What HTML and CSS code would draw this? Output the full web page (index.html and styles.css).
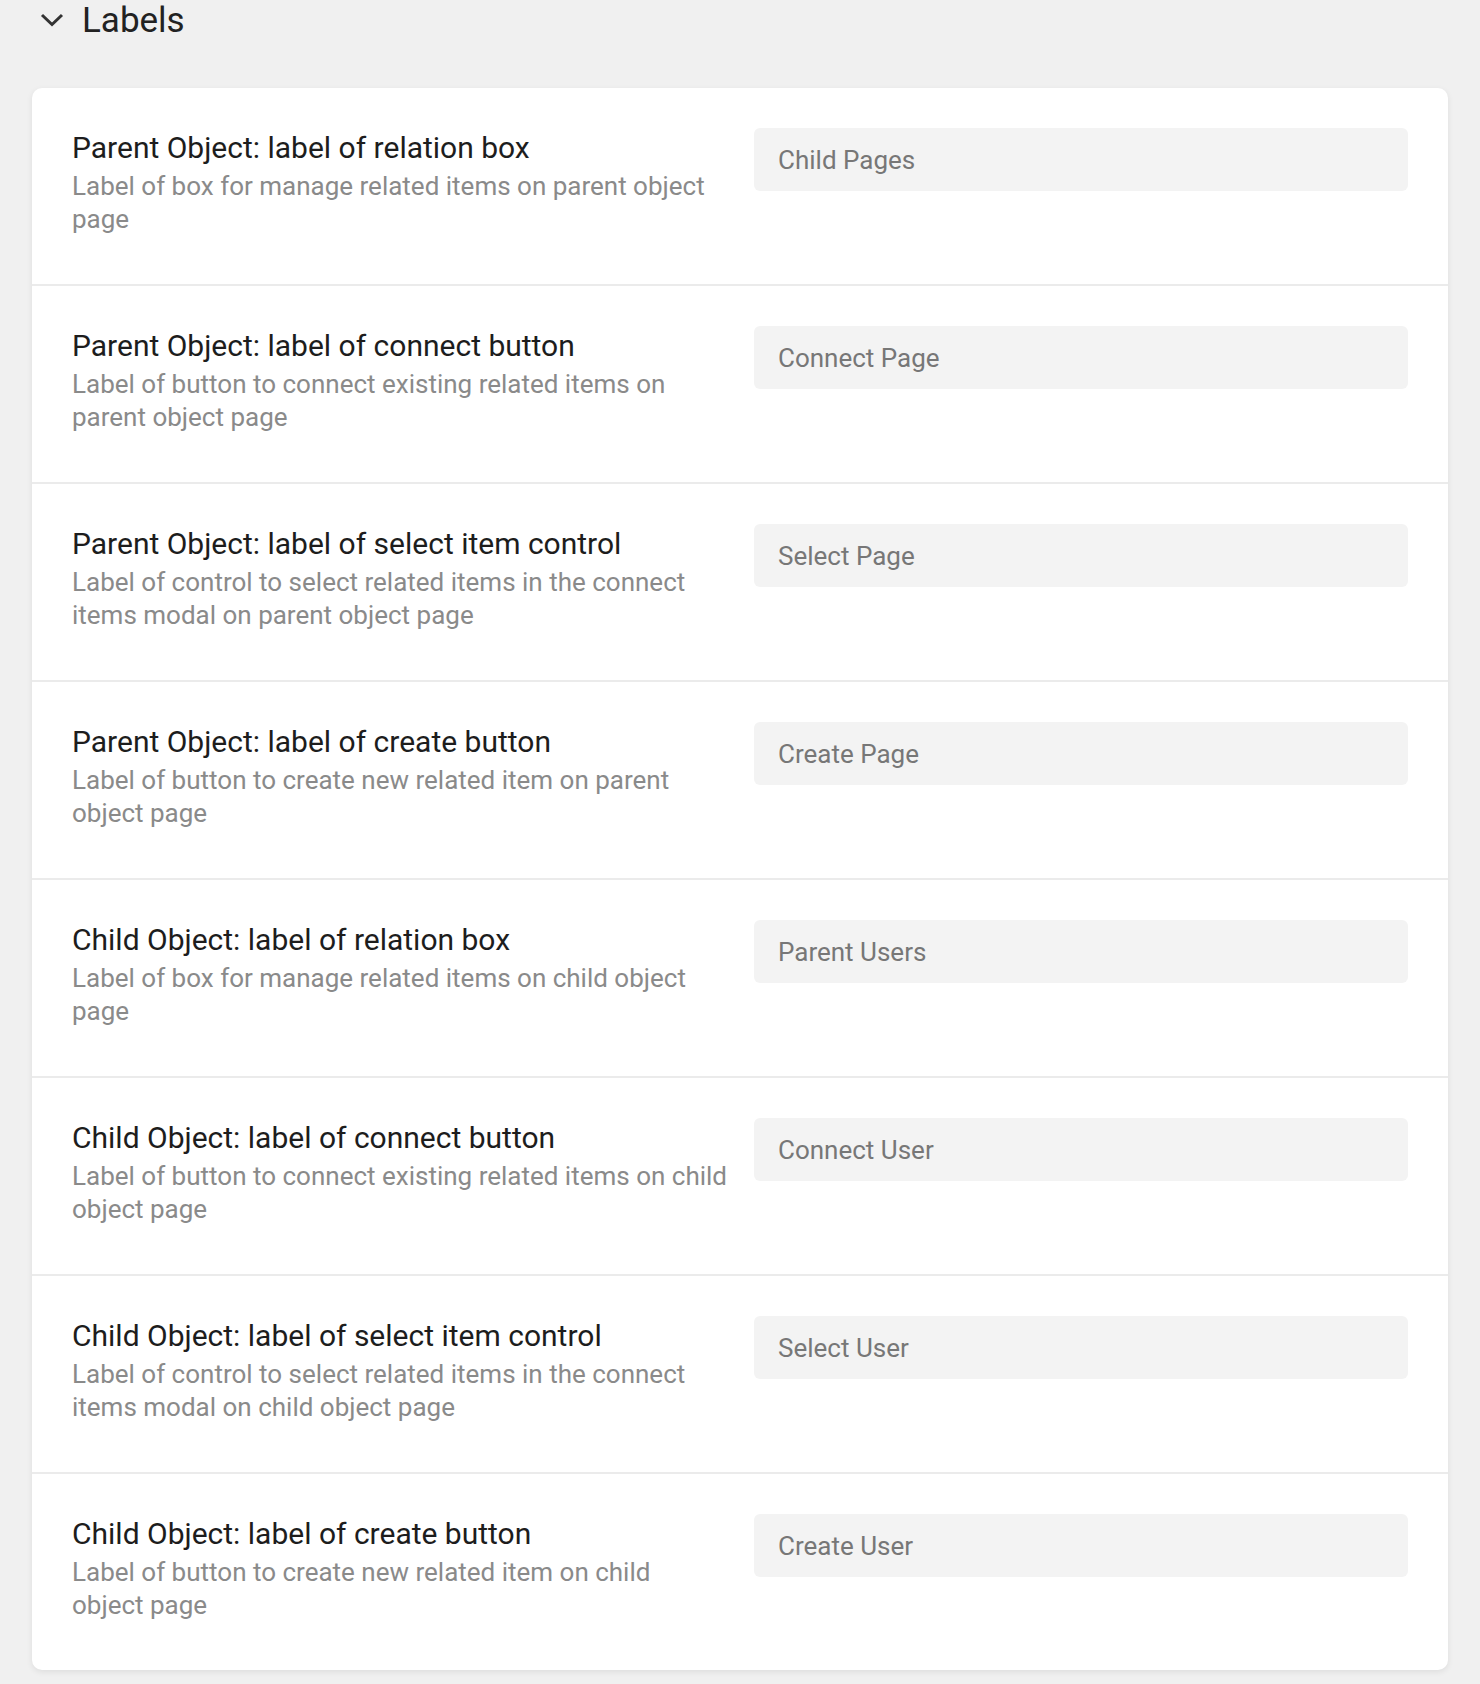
FILE: index.html
```html
<!DOCTYPE html>
<html lang="en">
<head>
  <meta charset="UTF-8" />
  <title>Labels</title>
  <link rel="stylesheet" href="styles.css">
</head>
<body>
  <div class="section-head">
    <svg class="chevron" width="24" height="14" viewBox="0 0 24 14"><path d="M2 2 L12 11.5 L22 2" fill="none" stroke="#333" stroke-width="3"/></svg>
    <span class="section-title">Labels</span>
  </div>
  <div class="card">
    <div class="row">
      <div class="row-text">
        <div class="row-title">Parent Object: label of relation box</div>
        <div class="row-desc">Label of box for manage related items on parent object page</div>
      </div>
      <input class="row-input" type="text" value="Child Pages">
    </div>
    <div class="row">
      <div class="row-text">
        <div class="row-title">Parent Object: label of connect button</div>
        <div class="row-desc">Label of button to connect existing related items on parent object page</div>
      </div>
      <input class="row-input" type="text" value="Connect Page">
    </div>
    <div class="row">
      <div class="row-text">
        <div class="row-title">Parent Object: label of select item control</div>
        <div class="row-desc">Label of control to select related items in the connect items modal on parent object page</div>
      </div>
      <input class="row-input" type="text" value="Select Page">
    </div>
    <div class="row">
      <div class="row-text">
        <div class="row-title">Parent Object: label of create button</div>
        <div class="row-desc">Label of button to create new related item on parent object page</div>
      </div>
      <input class="row-input" type="text" value="Create Page">
    </div>
    <div class="row">
      <div class="row-text">
        <div class="row-title">Child Object: label of relation box</div>
        <div class="row-desc">Label of box for manage related items on child object page</div>
      </div>
      <input class="row-input" type="text" value="Parent Users">
    </div>
    <div class="row">
      <div class="row-text">
        <div class="row-title">Child Object: label of connect button</div>
        <div class="row-desc">Label of button to connect existing related items on child object page</div>
      </div>
      <input class="row-input" type="text" value="Connect User">
    </div>
    <div class="row">
      <div class="row-text">
        <div class="row-title">Child Object: label of select item control</div>
        <div class="row-desc">Label of control to select related items in the connect items modal on child object page</div>
      </div>
      <input class="row-input" type="text" value="Select User">
    </div>
    <div class="row">
      <div class="row-text">
        <div class="row-title">Child Object: label of create button</div>
        <div class="row-desc">Label of button to create new related item on child<br>object page</div>
      </div>
      <input class="row-input" type="text" value="Create User">
    </div>
  </div>
</body>
</html>
```

FILE: styles.css
```css
body {
  background-color: #f0f0f0;
  font-family: Roboto, 'Noto Sans', sans-serif;
  margin: 0;
  padding: 0 32px 14px 32px;
  color: #222;
}
.section-head {
  display: flex;
  align-items: center;
  height: 40px;
  padding-left: 8px;
}
.chevron {
  margin-right: 18px;
}
.section-title {
  font-size: 35px;
  color: #222;
}
.card {
  margin-top: 48px;
  background: #fff;
  border-radius: 10px;
  box-shadow: 0 2px 6px rgba(0,0,0,0.08);
}
.row {
  display: grid;
  grid-template-columns: 660px 1fr;
  column-gap: 22px;
  align-items: start;
  padding: 40px 40px 48px 40px;
  border-bottom: 2px solid #ebebeb;
}
.row:last-child {
  border-bottom: none;
}
.row-title {
  font-size: 30px;
  line-height: 40px;
  color: #1d1d1d;
}
.row-desc {
  font-size: 26px;
  line-height: 33px;
  color: #8a8a8a;
  margin-top: 2px;
}
.row-input {
  height: 63px;
  box-sizing: border-box;
  border: none;
  border-radius: 6px;
  background: #f3f3f3;
  padding: 0 24px;
  font-family: Roboto, sans-serif;
  font-size: 26px;
  color: #777;
  outline: none;
  width: 100%;
}
```
